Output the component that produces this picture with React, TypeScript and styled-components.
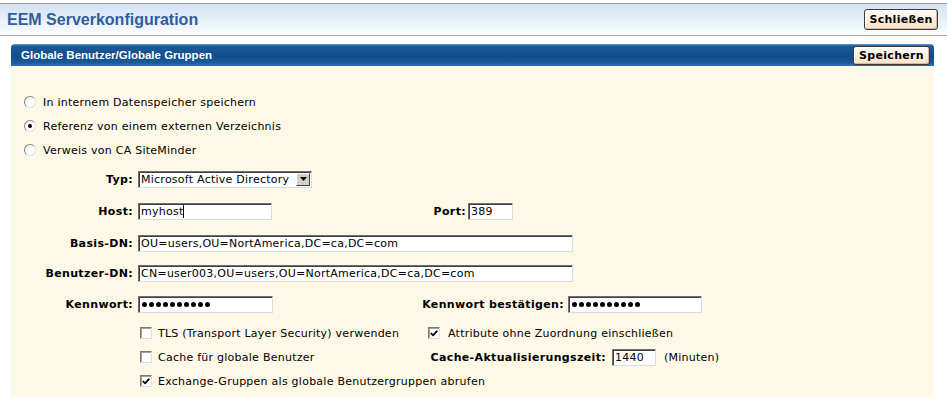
import React from 'react';
import styled, { createGlobalStyle } from 'styled-components';

const GlobalStyle = createGlobalStyle`
  html, body {
    margin: 0;
    padding: 0;
    background: #fff;
    overflow: hidden;
  }
  body {
    font-family: "DejaVu Sans", Verdana, sans-serif;
    font-size: 11px;
    letter-spacing: 0.25px;
    color: #000;
  }
`;

const Page = styled.div`
  width: 947px;
  height: 397px;
  overflow: hidden;
`;

const TopBar = styled.div`
  margin-top: 3px;
  height: 31px;
  padding: 0 9px 0 7px;
  display: flex;
  align-items: center;
  justify-content: space-between;
  border-top: 1px solid #9c9c9c;
  border-bottom: 1px solid #a9a9a9;
  background: linear-gradient(#d3e2f4, #fbfdff);
`;

const Title = styled.h1`
  margin: 0;
  font-family: "Liberation Sans", Arial, sans-serif;
  font-size: 16px;
  font-weight: bold;
  letter-spacing: 0;
  color: #2e5e9e;
`;

const Button = styled.button<{ $w: number; $h: number }>`
  width: ${({ $w }) => $w}px;
  height: ${({ $h }) => $h}px;
  padding: 0;
  font-family: "DejaVu Sans", Verdana, sans-serif;
  font-size: 11px;
  font-weight: bold;
  letter-spacing: 0.3px;
  color: #000;
  border: 1px solid #3a3a3a;
  border-radius: 3px;
  background: linear-gradient(#fffbf4, #f6e2c8);
  box-shadow: inset -1px -1px 0 #d9b993, inset 1px 1px 0 #fff;
  cursor: pointer;
`;

const Panel = styled.div`
  margin: 8px 13px 0 11px;
`;

const PanelHeader = styled.div`
  height: 22px;
  padding: 0 4px 0 10px;
  display: flex;
  align-items: center;
  justify-content: space-between;
  border-radius: 4px 4px 0 0;
  background: linear-gradient(
    180deg,
    #6797cc 0%,
    #1d5a98 10%,
    #124c8b 55%,
    #1a5a9a 85%,
    #3572b0 100%
  );
`;

const PanelTitle = styled.h2`
  margin: 0;
  font-family: "Liberation Sans", Arial, sans-serif;
  font-size: 11.5px;
  font-weight: bold;
  letter-spacing: 0;
  color: #fff;
`;

const PanelBody = styled.div`
  height: 331px;
  padding-top: 24px;
  box-sizing: border-box;
  background: #fef8e6;
`;

const RadioRow = styled.label`
  height: 24px;
  padding-left: 13px;
  display: flex;
  align-items: center;
  gap: 7px;
`;

const RadioMark = styled.span<{ $on?: boolean }>`
  width: 12px;
  height: 12px;
  box-sizing: border-box;
  border-radius: 50%;
  border: 1px solid;
  border-color: #808080 #e0e0e0 #e0e0e0 #808080;
  background: #fff;
  display: grid;
  place-content: center;

  &::after {
    content: '';
    width: 4px;
    height: 4px;
    border-radius: 50%;
    background: ${({ $on }) => ($on ? '#000' : 'transparent')};
  }
`;

const FieldRow = styled.div<{ $h: number }>`
  height: ${({ $h }) => $h}px;
  display: flex;
  align-items: center;
`;

const Label = styled.span<{ $w?: number; $pr?: number }>`
  width: ${({ $w }) => $w ?? 127}px;
  padding-right: ${({ $pr }) => $pr ?? 5}px;
  box-sizing: border-box;
  flex-shrink: 0;
  text-align: right;
  font-weight: bold;
  letter-spacing: 0.35px;
  white-space: nowrap;
`;

const Field = styled.div<{ $w: number }>`
  width: ${({ $w }) => $w}px;
  height: 17px;
  box-sizing: border-box;
  padding-left: 2px;
  display: flex;
  align-items: center;
  border: 1px solid;
  border-color: #6f6f6f #dcdcdc #dcdcdc #6f6f6f;
  box-shadow: inset 1px 1px 0 #404040;
  background: #fff;
  white-space: nowrap;
  overflow: hidden;
`;

const Caret = styled.span`
  width: 1px;
  height: 13px;
  background: #000;
`;

const Dots = styled.span`
  display: flex;
  gap: 2px;
  padding-left: 1px;
`;

const Dot = styled.span`
  width: 5px;
  height: 5px;
  border-radius: 50%;
  background: #000;
`;

const Select = styled(Field)`
  padding-left: 2px;
  padding-right: 1px;
  justify-content: space-between;
`;

const SelectButton = styled.span`
  width: 14px;
  height: 13px;
  box-sizing: border-box;
  display: grid;
  place-content: center;
  border: 1px solid;
  border-color: #fff #404040 #404040 #fff;
  background: #d4d0c8;
`;

const CheckRow = styled.div`
  height: 24px;
  padding-left: 129px;
  display: flex;
  align-items: center;
`;

const CheckItem = styled.label<{ $w?: number; $gap?: number }>`
  width: ${({ $w }) => ($w ? `${$w}px` : 'auto')};
  display: flex;
  align-items: center;
  gap: ${({ $gap }) => $gap ?? 6}px;
  white-space: nowrap;
`;

const CheckBox = styled.span`
  width: 12px;
  height: 12px;
  box-sizing: border-box;
  display: grid;
  place-content: center;
  border: 1px solid;
  border-color: #7a7a7a #dedede #dedede #7a7a7a;
  box-shadow: inset 1px 1px 0 #a0a0a0;
  background: #fff;
`;

const Suffix = styled.span`
  margin-left: 8px;
`;

const Radio = ({ on, children }: { on?: boolean; children: React.ReactNode }) => (
  <RadioRow>
    <RadioMark $on={on} />
    {children}
  </RadioRow>
);

const Check = ({
  on,
  w,
  gap,
  children,
}: {
  on?: boolean;
  w?: number;
  gap?: number;
  children: React.ReactNode;
}) => (
  <CheckItem $w={w} $gap={gap}>
    <CheckBox>
      {on && (
        <svg width="8" height="7" viewBox="0 0 8 7">
          <polyline points="0.8,3 3,5.3 7.3,0.8" fill="none" stroke="#000" strokeWidth="1.8" />
        </svg>
      )}
    </CheckBox>
    {children}
  </CheckItem>
);

const Password = ({ w }: { w: number }) => (
  <Field $w={w}>
    <Dots>
      {Array.from({ length: 10 }).map((_, i) => (
        <Dot key={i} />
      ))}
    </Dots>
  </Field>
);

export default function App() {
  return (
    <Page>
      <GlobalStyle />
      <TopBar>
        <Title>EEM Serverkonfiguration</Title>
        <Button $w={74} $h={21}>Schließen</Button>
      </TopBar>

      <Panel>
        <PanelHeader>
          <PanelTitle>Globale Benutzer/Globale Gruppen</PanelTitle>
          <Button $w={77} $h={19}>Speichern</Button>
        </PanelHeader>

        <PanelBody>
          <Radio>In internem Datenspeicher speichern</Radio>
          <Radio on>Referenz von einem externen Verzeichnis</Radio>
          <Radio>Verweis von CA SiteMinder</Radio>

          <FieldRow $h={34}>
            <Label>Typ:</Label>
            <Select $w={174}>
              Microsoft Active Directory
              <SelectButton>
                <svg width="7" height="4" viewBox="0 0 7 4">
                  <polygon points="0,0 7,0 3.5,4" fill="#000" />
                </svg>
              </SelectButton>
            </Select>
          </FieldRow>

          <FieldRow $h={31}>
            <Label>Host:</Label>
            <Field $w={134}>
              myhost
              <Caret />
            </Field>
            <Label $w={196} $pr={2}>Port:</Label>
            <Field $w={45}>389</Field>
          </FieldRow>

          <FieldRow $h={32}>
            <Label>Basis-DN:</Label>
            <Field $w={435}>OU=users,OU=NortAmerica,DC=ca,DC=com</Field>
          </FieldRow>

          <FieldRow $h={28}>
            <Label>Benutzer-DN:</Label>
            <Field $w={435}>CN=user003,OU=users,OU=NortAmerica,DC=ca,DC=com</Field>
          </FieldRow>

          <FieldRow $h={34}>
            <Label>Kennwort:</Label>
            <Password w={135} />
            <Label $w={295} $pr={4}>Kennwort bestätigen:</Label>
            <Password w={134} />
          </FieldRow>

          <CheckRow>
            <Check w={288}>TLS (Transport Layer Security) verwenden</Check>
            <Check on gap={8}>Attribute ohne Zuordnung einschließen</Check>
          </CheckRow>
          <CheckRow>
            <Check w={288}>Cache für globale Benutzer</Check>
            <Label $w={184} $pr={6}>Cache-Aktualisierungszeit:</Label>
            <Field $w={44}>1440</Field>
            <Suffix>(Minuten)</Suffix>
          </CheckRow>
          <CheckRow>
            <Check on>Exchange-Gruppen als globale Benutzergruppen abrufen</Check>
          </CheckRow>
        </PanelBody>
      </Panel>
    </Page>
  );
}
